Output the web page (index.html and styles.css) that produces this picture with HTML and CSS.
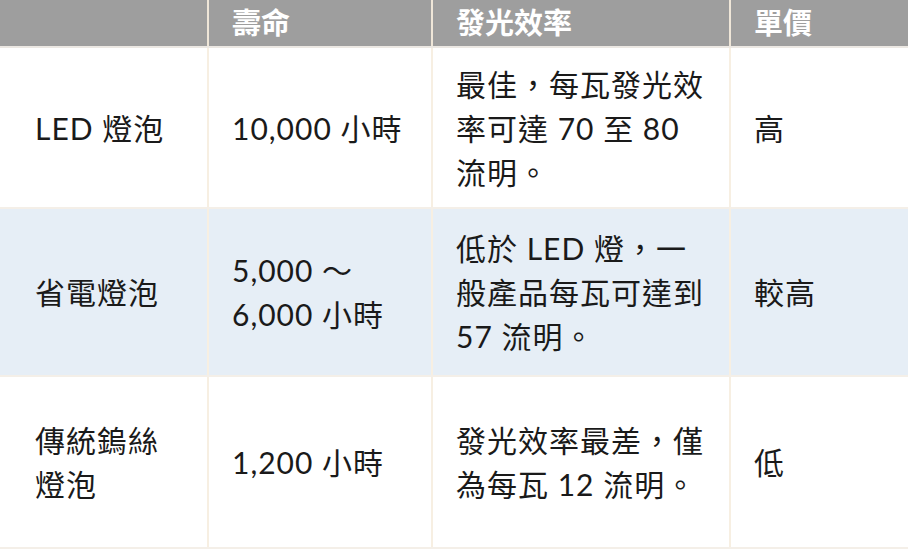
FILE: index.html
```html
<!DOCTYPE html>
<html lang="zh-Hant">
<head>
<meta charset="utf-8">
<link rel="stylesheet" href="styles.css">
</head>
<body>
<table class="compare">
  <colgroup>
    <col class="c1"><col class="c2"><col class="c3"><col class="c4">
  </colgroup>
  <thead>
    <tr class="head">
      <th class="first"></th>
      <th>壽命</th>
      <th>發光效率</th>
      <th>單價</th>
    </tr>
  </thead>
  <tbody>
    <tr class="r1">
      <td class="first">LED 燈泡</td>
      <td>10,000 小時</td>
      <td>最佳，每瓦發光效<br>率可達 70 至 80<br>流明。</td>
      <td>高</td>
    </tr>
    <tr class="r2 alt">
      <td class="first">省電燈泡</td>
      <td>5,000 ～<br>6,000 小時</td>
      <td>低於 LED 燈，一<br>般產品每瓦可達到<br>57 流明。</td>
      <td>較高</td>
    </tr>
    <tr class="r3">
      <td class="first">傳統鎢絲<br>燈泡</td>
      <td>1,200 小時</td>
      <td>發光效率最差，僅<br>為每瓦 12 流明。</td>
      <td>低</td>
    </tr>
  </tbody>
</table>
</body>
</html>
```

FILE: styles.css
```css
html, body {
  margin: 0;
  padding: 0;
  background: #ffffff;
}

.compare {
  width: 908px;
  border-collapse: collapse;
  table-layout: fixed;
  font-family: "Lato", "Noto Sans CJK TC", sans-serif;
  color: #1e1e1e;
}

.c1 { width: 208px; }
.c2 { width: 224px; }
.c3 { width: 298px; }
.c4 { width: 178px; }

.compare th,
.compare td {
  text-align: left;
  vertical-align: middle;
  padding: 0 6px 0 23px;
  border-left: 2px solid #f7efe2;
  border-bottom: 2px solid #f4efe8;
}

.compare th.first,
.compare td.first {
  border-left: none;
  padding-left: 35px;
}

.head th {
  background: #9e9e9e;
  color: #ffffff;
  font-weight: 700;
  font-size: 29px;
  height: 46px;
  line-height: 46px;
  border-left-color: #efe6d8;
  border-bottom-color: #ece8e3;
}

.compare td {
  font-size: 30px;
  font-weight: 400;
  line-height: 44px;
  letter-spacing: 1px;
  color: #1a1a1a;
}

.r1 td { height: 159px; }
.r2 td { height: 166px; }
.r3 td { height: 170px; }

.alt td {
  background: #e6eef6;
}
```
